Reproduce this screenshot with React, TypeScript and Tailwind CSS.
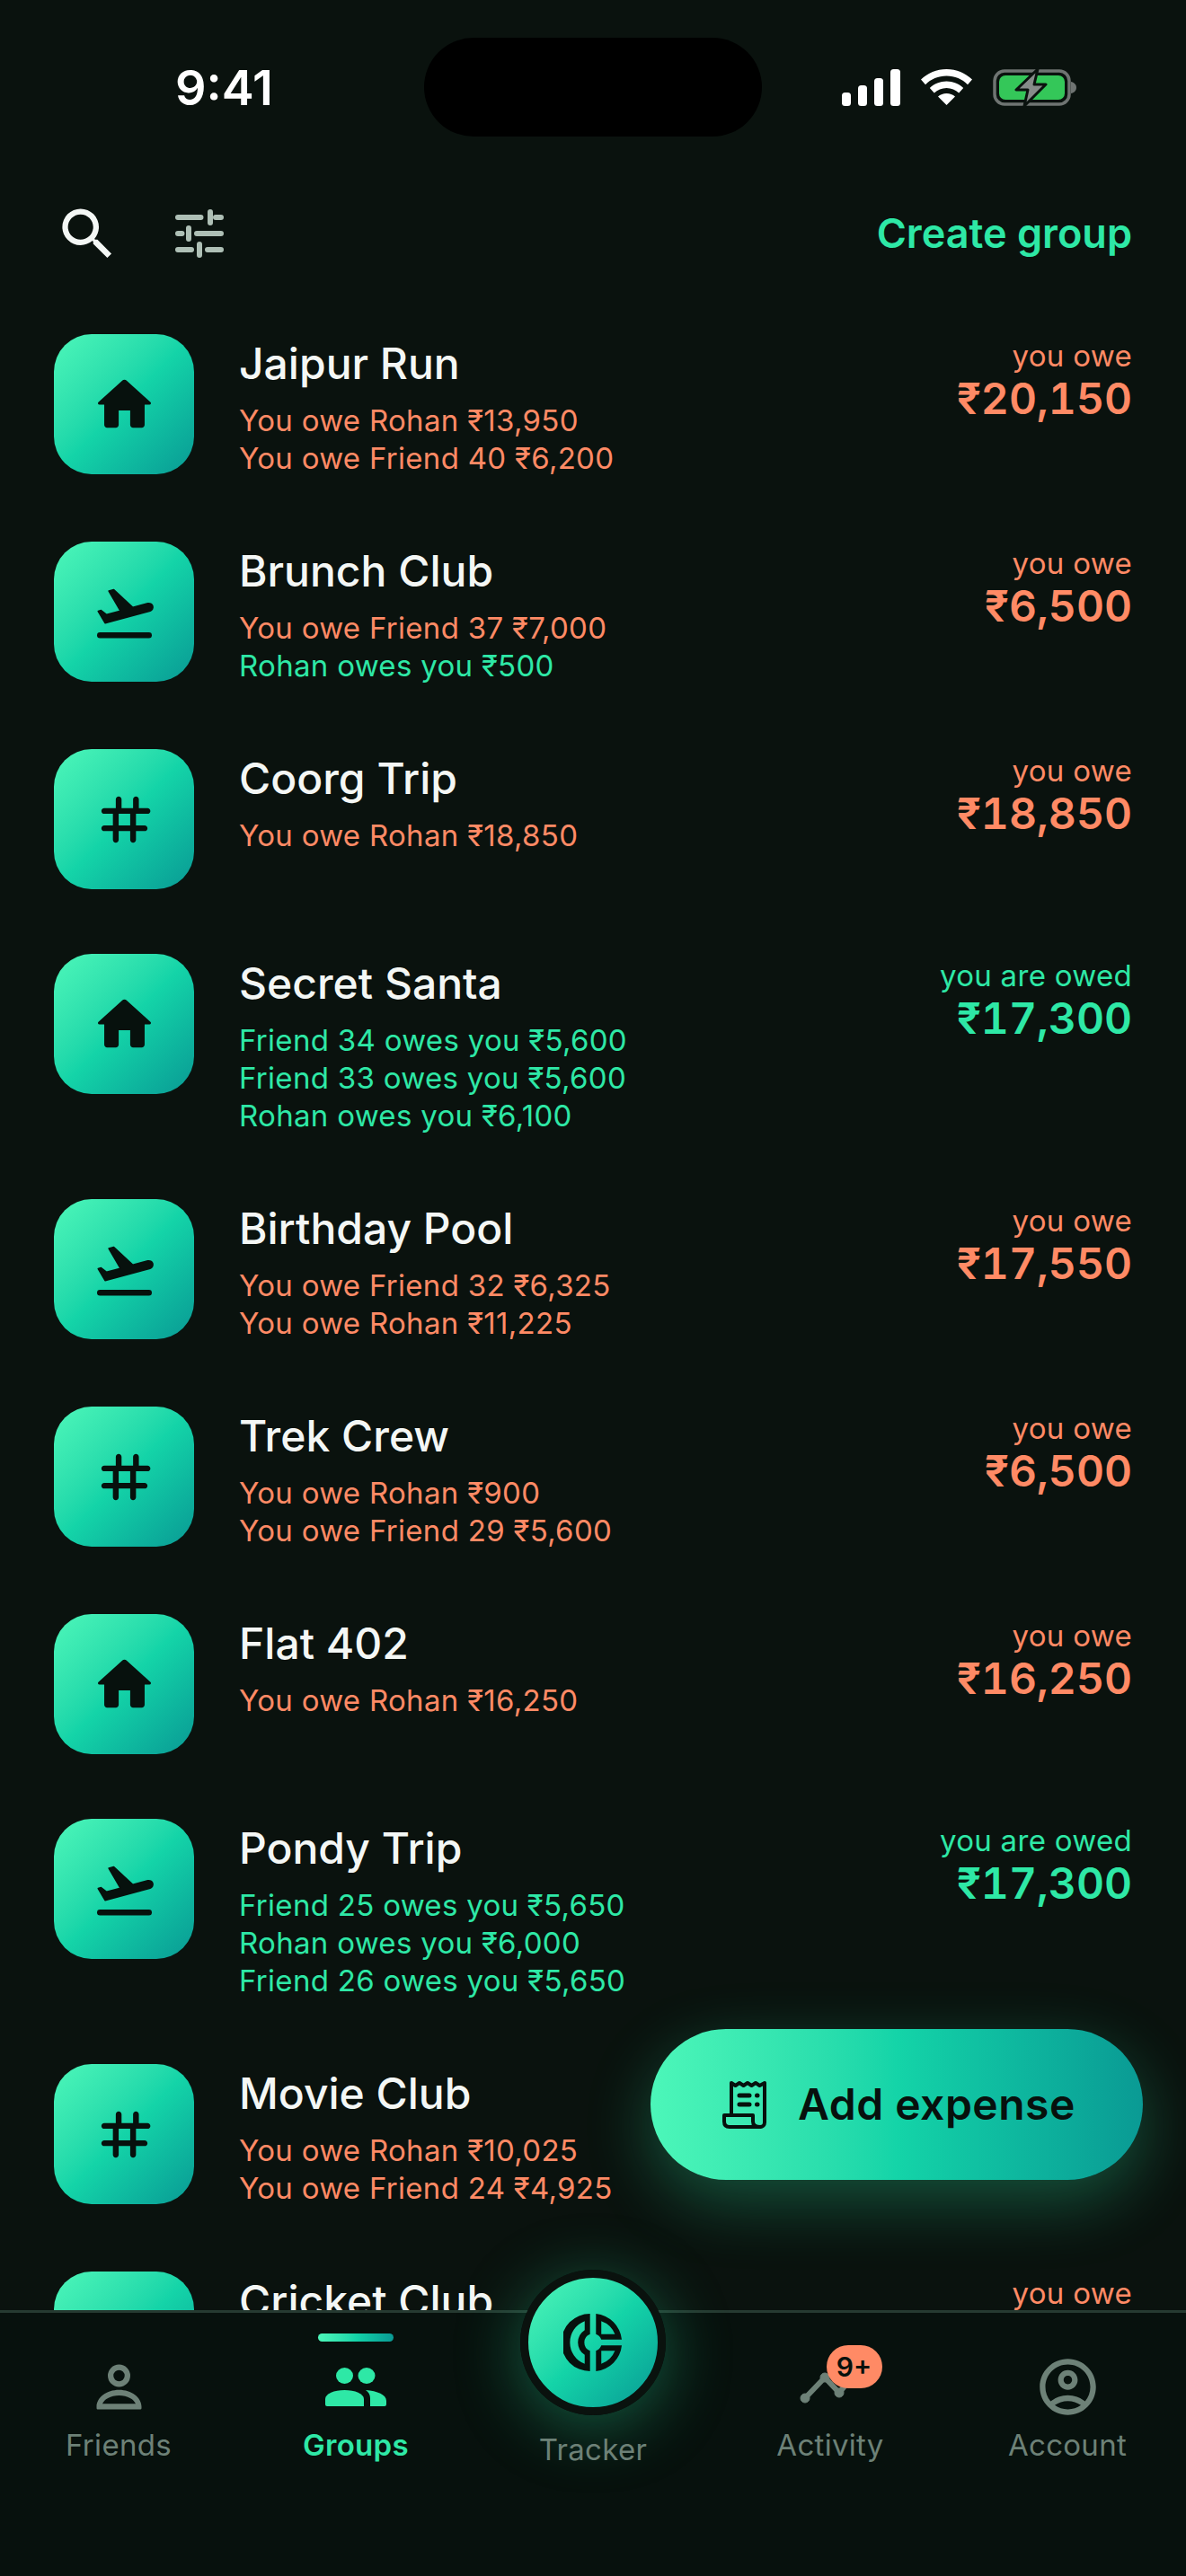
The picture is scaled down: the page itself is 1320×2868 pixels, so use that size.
import type { ReactNode } from "react";
import { MdOutlineAccountCircle, MdSearch } from "react-icons/md";

type IconKind = "home" | "flight" | "tag";

interface Group {
  name: string;
  icon: IconKind;
  label: string;
  amount?: string;
  owed?: boolean;
  lines: { text: string; owed?: boolean }[];
}

const groups: Group[] = [
  {
    name: "Jaipur Run",
    icon: "home",
    label: "you owe",
    amount: "₹20,150",
    lines: [{ text: "You owe Rohan ₹13,950" }, { text: "You owe Friend 40 ₹6,200" }],
  },
  {
    name: "Brunch Club",
    icon: "flight",
    label: "you owe",
    amount: "₹6,500",
    lines: [{ text: "You owe Friend 37 ₹7,000" }, { text: "Rohan owes you ₹500", owed: true }],
  },
  {
    name: "Coorg Trip",
    icon: "tag",
    label: "you owe",
    amount: "₹18,850",
    lines: [{ text: "You owe Rohan ₹18,850" }],
  },
  {
    name: "Secret Santa",
    icon: "home",
    label: "you are owed",
    amount: "₹17,300",
    owed: true,
    lines: [
      { text: "Friend 34 owes you ₹5,600", owed: true },
      { text: "Friend 33 owes you ₹5,600", owed: true },
      { text: "Rohan owes you ₹6,100", owed: true },
    ],
  },
  {
    name: "Birthday Pool",
    icon: "flight",
    label: "you owe",
    amount: "₹17,550",
    lines: [{ text: "You owe Friend 32 ₹6,325" }, { text: "You owe Rohan ₹11,225" }],
  },
  {
    name: "Trek Crew",
    icon: "tag",
    label: "you owe",
    amount: "₹6,500",
    lines: [{ text: "You owe Rohan ₹900" }, { text: "You owe Friend 29 ₹5,600" }],
  },
  {
    name: "Flat 402",
    icon: "home",
    label: "you owe",
    amount: "₹16,250",
    lines: [{ text: "You owe Rohan ₹16,250" }],
  },
  {
    name: "Pondy Trip",
    icon: "flight",
    label: "you are owed",
    amount: "₹17,300",
    owed: true,
    lines: [
      { text: "Friend 25 owes you ₹5,650", owed: true },
      { text: "Rohan owes you ₹6,000", owed: true },
      { text: "Friend 26 owes you ₹5,650", owed: true },
    ],
  },
  {
    name: "Movie Club",
    icon: "tag",
    label: "",
    lines: [{ text: "You owe Rohan ₹10,025" }, { text: "You owe Friend 24 ₹4,925" }],
  },
  { name: "Cricket Club", icon: "home", label: "you owe", lines: [] },
];

function GroupGlyph({ kind }: { kind: IconKind }) {
  if (kind === "home") {
    return (
      <svg viewBox="0 0 24 24" className="h-[77px] w-[77px] fill-[#07110d]">
        <path d="M10 19v-5h4v5c0 .55.45 1 1 1h3c.55 0 1-.45 1-1v-7h1.7c.46 0 .68-.57.33-.87L12.67 3.6c-.38-.34-.96-.34-1.34 0l-8.36 7.53c-.34.3-.13.87.33.87H5v7c0 .55.45 1 1 1h3c.55 0 1-.45 1-1z" />
      </svg>
    );
  }
  if (kind === "flight") {
    return (
      <svg viewBox="0 0 24 24" className="h-[77px] w-[77px] fill-[#07110d]">
        <rect x="2.5" y="19" width="19" height="2" rx="1" />
        <path
          d="M21.8 9.9c-.2-.7-1-1.1-1.7-.9L14.9 10.4 8.3 4.2l-1.7.5 4 6.9-4.8 1.3-1.9-1.5-1 .3 2.4 4.1L20.9 11.6c.7-.2 1.1-1 .9-1.7z"
          stroke="#07110d"
          strokeWidth="0.5"
          strokeLinejoin="round"
        />
      </svg>
    );
  }
  return (
    <svg viewBox="0 0 24 24" className="h-[77px] w-[77px] fill-[#07110d]">
      <path d="M20 10c.55 0 1-.45 1-1s-.45-1-1-1h-3V5c0-.55-.45-1-1-1s-1 .45-1 1v3h-4V5c0-.55-.45-1-1-1s-1 .45-1 1v3H5c-.55 0-1 .45-1 1s.45 1 1 1h3v4H5c-.55 0-1 .45-1 1s.45 1 1 1h3v3c0 .55.45 1 1 1s1-.45 1-1v-3h4v3c0 .55.45 1 1 1s1-.45 1-1v-3h3c.55 0 1-.45 1-1s-.45-1-1-1h-3v-4h3zm-6 4h-4v-4h4v4z" />
    </svg>
  );
}

function GroupRow({ group }: { group: Group }) {
  return (
    <div className="flex items-start justify-between py-[36px]">
      <div className="flex items-start gap-[50px]">
        <div className="flex h-[156px] w-[156px] shrink-0 items-center justify-center rounded-[42px] bg-linear-to-br from-[#4cf7b9] via-[#14d4a8] to-[#0a9a94]">
          <GroupGlyph kind={group.icon} />
        </div>
        <div>
          <div className="mb-[9px] text-[48px] leading-[66px] font-medium text-[#f4f7f5]">{group.name}</div>
          {group.lines.map((line) => (
            <div
              key={line.text}
              className={`text-[33px] leading-[42px] tracking-[0.3px] ${line.owed ? "text-[#2ee8a6]" : "text-[#ff8a65]"}`}
            >
              {line.text}
            </div>
          ))}
        </div>
      </div>
      <div className={`text-right ${group.owed ? "text-[#2ee8a6]" : "text-[#ff8a65]"}`}>
        <div className="mt-[3px] text-[33px] leading-[42px] tracking-[0.3px]">{group.label}</div>
        <div className="text-[48px] leading-[54px] font-semibold tabular-nums">{group.amount}</div>
      </div>
    </div>
  );
}

function StatusIcons() {
  return (
    <div className="flex items-center gap-[23px]">
      {/* signal */}
      <svg viewBox="0 0 65 41" className="h-[41px] w-[65px] fill-white">
        <rect x="0" y="26" width="10" height="15" rx="3.5" />
        <rect x="18" y="18" width="10" height="23" rx="3.5" />
        <rect x="36" y="10" width="10" height="31" rx="3.5" />
        <rect x="54" y="0" width="11" height="41" rx="3.5" />
      </svg>
      {/* wifi */}
      <svg viewBox="0 0 57 40" className="h-[40px] w-[57px] fill-white">
        <path d="M28.5 0C17.5 0 7.6 4.3 0 11.6l5 5.6C11 11.3 19.3 7.6 28.5 7.6s17.5 3.7 23.5 9.6l5-5.6C49.4 4.3 39.5 0 28.5 0z" />
        <path d="M28.5 13.5c-7.2 0-13.8 2.8-18.7 7.4l5 5.6c3.6-3.3 8.4-5.4 13.7-5.4s10.1 2.1 13.7 5.4l5-5.6c-4.9-4.6-11.5-7.4-18.7-7.4z" />
        <path d="M28.5 27c-3.7 0-7 1.3-9.5 3.5L28.5 40 38 30.5C35.5 28.3 32.2 27 28.5 27z" />
      </svg>
      {/* battery, charging */}
      <svg viewBox="0 0 93 43" className="h-[43px] w-[93px]">
        <rect x="2" y="3" width="83" height="37" rx="11" fill="none" stroke="#6f7472" strokeWidth="3.5" />
        <rect x="7" y="8" width="73" height="27" rx="7" fill="#34c759" />
        <path d="M87 15c3 .5 6 3 6 6.5s-3 6-6 6.5z" fill="#6f7472" />
        <path
          d="M50 1 26 24h13l-4 18 24-24H46z"
          fill="#868b89"
          stroke="#0a120e"
          strokeWidth="3"
          strokeLinejoin="round"
        />
      </svg>
    </div>
  );
}

function TuneIcon() {
  return (
    <svg
      viewBox="0 0 24 24"
      className="h-[72px] w-[72px] fill-none stroke-[#aebfb5]"
      strokeWidth="2"
      strokeLinecap="round"
    >
      <path d="M4 6h8.5M18 6h2M16 4v4M4 12h1.5M11 12h9M8 10v4M4 18h5M15 18h5M12 16v4" />
    </svg>
  );
}

function ReceiptIcon() {
  return (
    <svg
      viewBox="0 0 49 54"
      className="h-[54px] w-[49px] fill-none stroke-[#07110d]"
      strokeWidth="4"
      strokeLinecap="round"
      strokeLinejoin="round"
    >
      <path d="M10 38V3l4.5 3L19 3l4.500 3L28 3l4.500 3L37 3l4.500 3L47 3v44c0 3-2 5-5 5" />
      <path d="M34 39H2v7c0 4 2 6 6 6h34c-5 0-8-2-8-6v-7z" />
      <path d="M19 17h11M19 27h11M38.5 17h.5M38.5 27h.5" strokeWidth="5" />
    </svg>
  );
}

function TrackerGlyph() {
  return (
    <svg viewBox="-100 -100 200 200" className="h-[66px] w-[66px] fill-[#07110d]" fillRule="evenodd">
      <path d="M-10-97A97 97 0 0 0-10 97V28A30 30 0 0 1-10-28ZM-28-72A77 77 0 0 0-28 72V42A50 50 0 0 1-28-42Z" />
      <path d="M10-97A97 97 0 0 1 97-10H28A30 30 0 0 0 10-28ZM28-72A77 77 0 0 1 74-28H28Z" />
      <path d="M10 97A97 97 0 0 0 97 10H28A30 30 0 0 1 10 28ZM28 72A77 77 0 0 0 74 28H28Z" />
    </svg>
  );
}

function NavItem({ label, active, children }: { label: string; active?: boolean; children: ReactNode }) {
  return (
    <div className="relative flex flex-col items-center pt-[45px]">
      {active && (
        <div className="absolute top-[23px] h-[9px] w-[84px] rounded-full bg-linear-to-r from-[#4cf7b9] via-[#14d4a8] to-[#0a9a94]" />
      )}
      <div className="flex h-[75px] items-center justify-center">{children}</div>
      <div
        className={`mt-[6px] text-[33px] leading-[42px] tracking-[0.3px] ${
          active ? "font-semibold text-[#2ee8a6]" : "text-[#6d8177]"
        }`}
      >
        {label}
      </div>
    </div>
  );
}

export default function App() {
  return (
    <div className="relative flex h-[2868px] w-[1320px] flex-col overflow-hidden bg-[#0a120e] [font-family:Inter,sans-serif]">
      {/* status bar */}
      <div className="flex h-[194px] shrink-0 items-center justify-between pr-[122px] pl-[195px]">
        <span className="text-[54px] font-semibold text-white">9:41</span>
        <StatusIcons />
      </div>
      <div className="absolute top-[42px] left-[472px] h-[110px] w-[376px] rounded-full bg-black" />

      {/* toolbar */}
      <div className="flex h-[132px] shrink-0 items-center justify-between px-[60px]">
        <div className="flex items-center gap-[51px]">
          <MdSearch className="h-[75px] w-[75px] text-[#f4f7f5]" />
          <TuneIcon />
        </div>
        <span className="text-[45px] font-semibold text-[#2ee8a6]">Create group</span>
      </div>

      {/* group list */}
      <div className="min-h-0 flex-1 overflow-hidden px-[60px] pt-[10px]">
        {groups.map((group) => (
          <GroupRow key={group.name} group={group} />
        ))}
      </div>

      {/* add expense */}
      <div className="absolute right-[48px] bottom-[441px] flex h-[168px] w-[548px] items-center gap-[35px] rounded-full bg-linear-to-r from-[#4cf7b9] via-[#14d4a8] to-[#0a9a94] pl-[80px] shadow-[0_24px_72px_rgba(46,232,166,0.3)]">
        <ReceiptIcon />
        <span className="text-[48px] font-semibold tracking-[0.5px] text-[#07110d]">Add expense</span>
      </div>

      {/* bottom navigation */}
      <div className="grid h-[296px] shrink-0 grid-cols-5 border-t-[3px] border-[#263a31] bg-[#07110d]">
        <NavItem label="Friends">
          <svg viewBox="0 0 24 24" className="h-[75px] w-[75px] fill-[#6d8177]" fillRule="evenodd">
            <path d="M12 4a4 4 0 1 0 0 8 4 4 0 0 0 0-8zm0 2a2 2 0 1 1 0 4 2 2 0 0 1 0-4zM12 13c-4.4 0-8 2.7-8 6v.5c0 .3.2.5.5.5h15c.3 0 .5-.2.5-.5V19c0-3.3-3.600-6-8-6zm0 2c3 0 5.500 1.500 5.900 3H6.100C6.500 16.500 9 15 12 15z" />
          </svg>
        </NavItem>
        <NavItem label="Groups" active>
          <svg viewBox="0 0 68 43" className="h-[43px] w-[68px] fill-[#2ee8a6]">
            <ellipse cx="21.5" cy="9" rx="9.5" ry="9" />
            <ellipse cx="46" cy="9" rx="9.5" ry="9" />
            <path d="M2 43Q0 43 0 41V35C0 29 10 25 21.5 25S43 29 43 35V43Z" />
            <path d="M45 25C58 26 68 30 68 37V41Q68 43 66 43H50V34C50 30 48 27 45 25Z" />
          </svg>
        </NavItem>
        <div className="relative z-10 -mt-[48px] flex flex-col items-center">
          <div className="flex h-[162px] w-[162px] items-center justify-center rounded-full border-[9px] border-[#0a120e] bg-linear-to-br from-[#4cf7b9] via-[#14d4a8] to-[#0a9a94] shadow-[0_12px_72px_rgba(46,232,166,0.35)]">
            <TrackerGlyph />
          </div>
          <div className="mt-[17px] text-[33px] leading-[42px] tracking-[0.3px] text-[#6d8177]">Tracker</div>
        </div>
        <NavItem label="Activity">
          <div className="relative h-[75px] w-[75px]">
            <svg viewBox="0 0 75 75" className="absolute inset-0 h-[75px] w-[75px] fill-[#6d8177] stroke-[#6d8177]">
              <path d="M9 50 31 27 47 44 65 22" fill="none" strokeWidth="6" strokeLinecap="round" strokeLinejoin="round" />
              <circle cx="9" cy="50" r="5" />
              <circle cx="31" cy="27" r="5" />
              <circle cx="47" cy="44" r="5" />
            </svg>
            <div className="absolute top-[-9px] left-[33px] flex h-[48px] w-[62px] items-center justify-center rounded-[24px] bg-[#ff8a65] text-[30px] font-semibold text-[#07110d]">
              9+
            </div>
          </div>
        </NavItem>
        <NavItem label="Account">
          <MdOutlineAccountCircle className="h-[75px] w-[75px] text-[#6d8177]" />
        </NavItem>
      </div>
    </div>
  );
}
